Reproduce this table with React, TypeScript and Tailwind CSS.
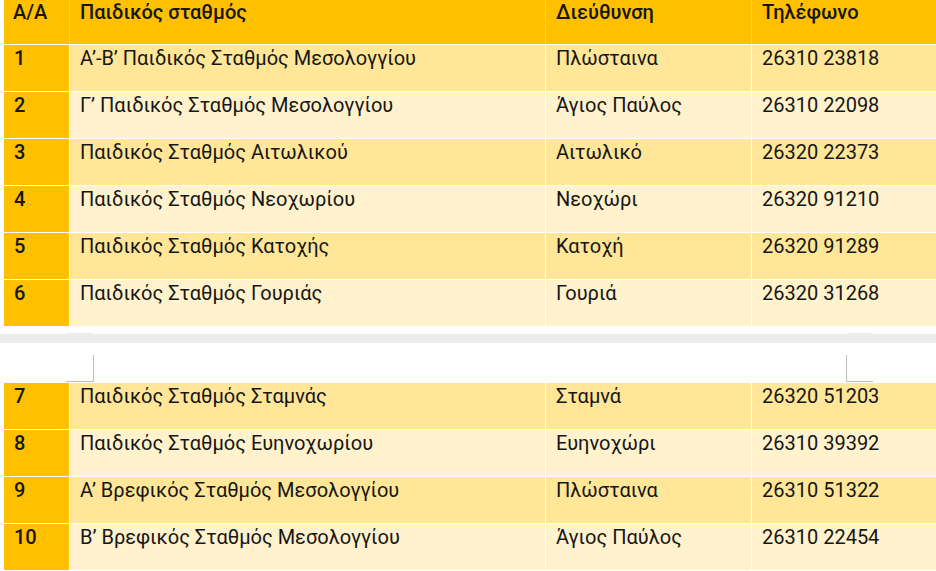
import React from "react";

type Row = { n: string; name: string; place: string; phone: string };

const top: Row[] = [
  { n: "1", name: "Α’-Β’ Παιδικός Σταθμός Μεσολογγίου", place: "Πλώσταινα", phone: "26310 23818" },
  { n: "2", name: "Γ’ Παιδικός Σταθμός Μεσολογγίου", place: "Άγιος Παύλος", phone: "26310 22098" },
  { n: "3", name: "Παιδικός Σταθμός Αιτωλικού", place: "Αιτωλικό", phone: "26320 22373" },
  { n: "4", name: "Παιδικός Σταθμός Νεοχωρίου", place: "Νεοχώρι", phone: "26320 91210" },
  { n: "5", name: "Παιδικός Σταθμός Κατοχής", place: "Κατοχή", phone: "26320 91289" },
  { n: "6", name: "Παιδικός Σταθμός Γουριάς", place: "Γουριά", phone: "26320 31268" },
];

const bottom: Row[] = [
  { n: "7", name: "Παιδικός Σταθμός Σταμνάς", place: "Σταμνά", phone: "26320 51203" },
  { n: "8", name: "Παιδικός Σταθμός Ευηνοχωρίου", place: "Ευηνοχώρι", phone: "26310 39392" },
  { n: "9", name: "Α’ Βρεφικός Σταθμός Μεσολογγίου", place: "Πλώσταινα", phone: "26310 51322" },
  { n: "10", name: "Β’ Βρεφικός Σταθμός Μεσολογγίου", place: "Άγιος Παύλος", phone: "26310 22454" },
];

const cols = "grid grid-cols-[65px_475px_205px_1fr] gap-x-px";

function TableRows({ rows }: { rows: Row[] }) {
  return (
    <div className="flex flex-col gap-px">
      {rows.map((r, i) => {
        const bg = i % 2 === 0 ? "bg-[#FFE699]" : "bg-[#FFF2CC]";
        return (
          <div key={r.n} className={`${cols} h-[46px]`}>
            <div className="bg-[#FFC000] pl-[10px] pt-px font-medium">{r.n}</div>
            <div className={`${bg} pl-[10px] pt-px`}>{r.name}</div>
            <div className={`${bg} pl-[10px] pt-px`}>{r.place}</div>
            <div className={`${bg} pl-[10px] pt-px`}>{r.phone}</div>
          </div>
        );
      })}
    </div>
  );
}

export default function App() {
  return (
    <div className="w-[936px] h-[571px] bg-white overflow-hidden pl-[4px] text-[20px] leading-[24px] text-[#161616] font-['Roboto','Noto_Sans',sans-serif]">
      {/* header */}
      <div className={`${cols} h-[44px] mb-px bg-[#FFD34D] font-medium`}>
        <div className="bg-[#FFC000] pl-[9px]">Α/Α</div>
        <div className="bg-[#FFC000] pl-[10px]">Παιδικός σταθμός</div>
        <div className="bg-[#FFC000] pl-[10px]">Διεύθυνση</div>
        <div className="bg-[#FFC000] pl-[10px]">Τηλέφωνο</div>
      </div>

      <TableRows rows={top} />

      {/* page break */}
      <div className="-ml-[4px] h-[8px] flex justify-between items-end">
        <div className="ml-[66px] w-[27px] h-px bg-[#ececec]" />
        <div className="mr-[63px] w-[26px] h-px bg-[#ececec]" />
      </div>
      <div className="-ml-[4px] h-[9px] bg-[#ededed]" />
      <div className="-ml-[4px] h-[40px] flex justify-between items-end pb-px">
        <div className="ml-[66px] w-[28px] h-[27px] border-r border-b border-[#bdbdbd]" />
        <div className="mr-[63px] w-[27px] h-[27px] border-l border-b border-[#bdbdbd]" />
      </div>

      <TableRows rows={bottom} />
    </div>
  );
}
